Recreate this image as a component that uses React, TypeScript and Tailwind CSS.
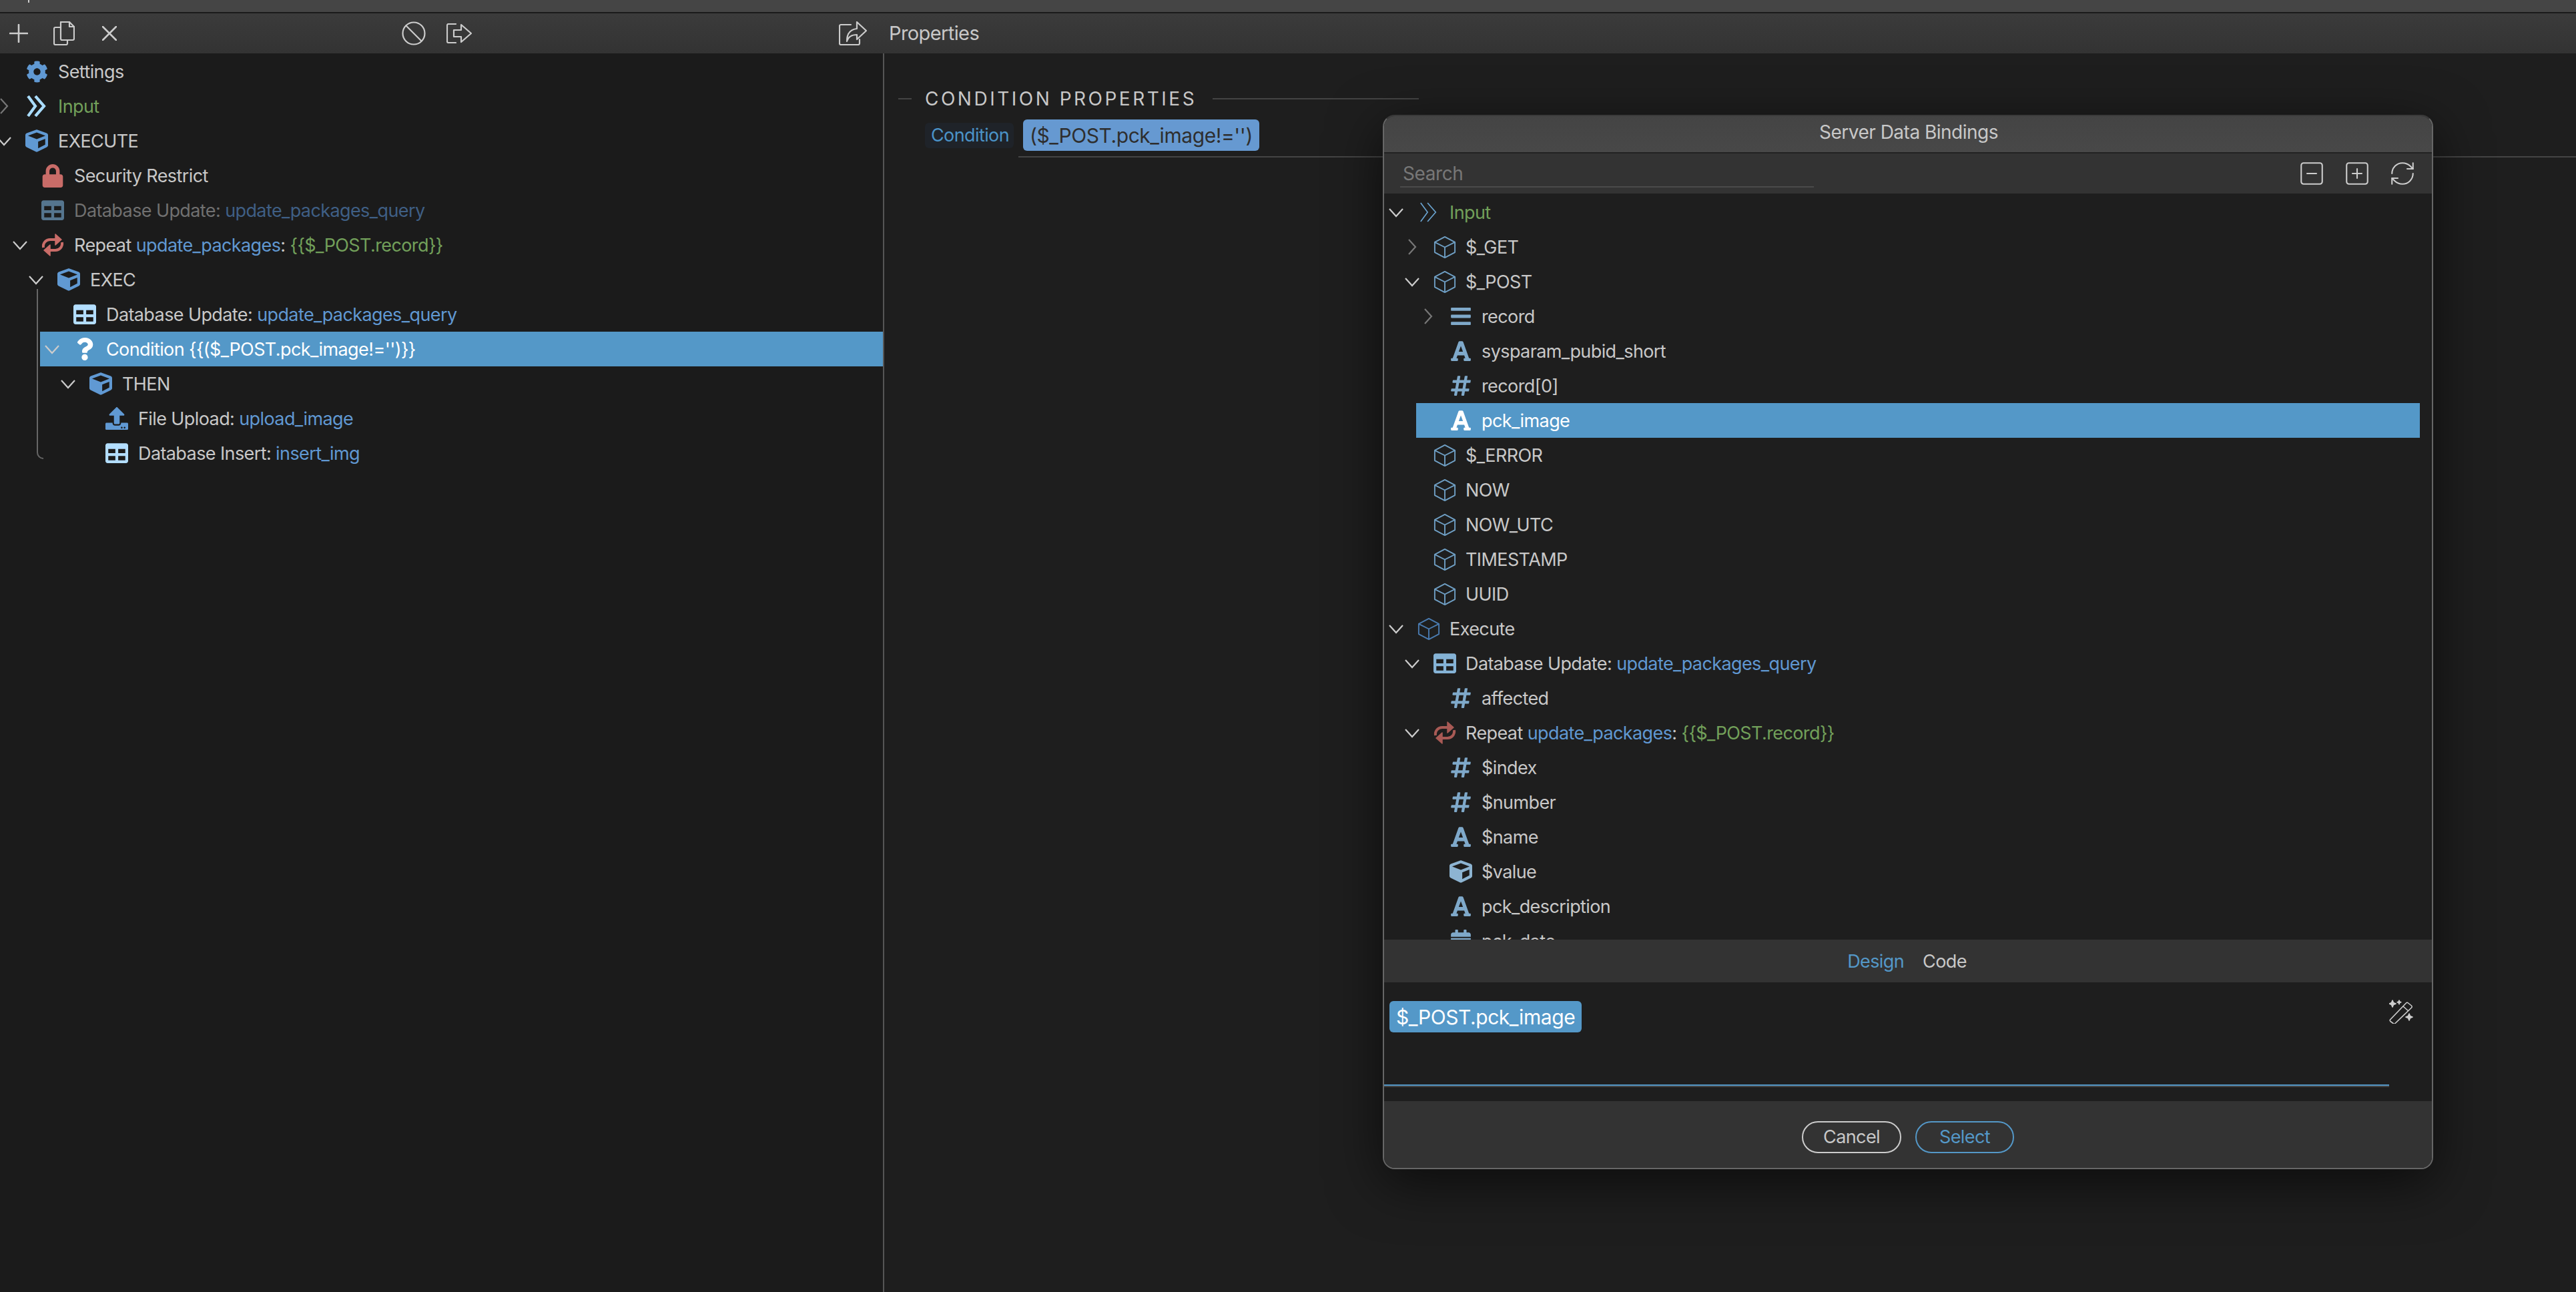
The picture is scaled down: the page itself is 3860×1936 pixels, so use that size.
import React from "react";
import { FaCog, FaCube, FaLock, FaTable, FaQuestion, FaUpload, FaFont, FaHashtag, FaBars, FaCalendarAlt } from "react-icons/fa";
import { SquareMinus, SquarePlus, RefreshCw } from "lucide-react";

const Chev = ({ open, dim }: { open?: boolean; dim?: boolean }) => (
  <svg viewBox="0 0 24 24" className="w-[24px] h-[24px]" fill="none" stroke={dim ? "#777" : "#ccc"} strokeWidth="2.2">
    {open ? <path d="M2 7l10 11L22 7" /> : <path d="M7 1l10 11L7 23" />}
  </svg>
);

const Outline = ({ c = "#6f9fc4" }: { c?: string }) => (
  <svg viewBox="0 0 36 36" className="w-[35px] h-[35px]" fill="none" stroke={c} strokeWidth="2" strokeLinejoin="round">
    <path d="M18 1.5l16 8.5v16l-16 8.5L2 26V10z" />
    <path d="M2 10l16 8 16-8M18 18v16.5" />
  </svg>
);

const Doubles = ({ thin }: { thin?: boolean }) => (
  <svg viewBox="0 0 32 32" className={thin ? "w-[30px] h-[32px]" : "w-[32px] h-[32px]"} fill="none" stroke={thin ? "#6aa3cf" : "#a9dcff"} strokeWidth={thin ? 1.8 : 4.2}>
    <path d="M3 1l11 15L3 31" />
    <path d="M14 1l13 15-13 15" />
  </svg>
);

const Loop = ({ c }: { c: string }) => (
  <svg viewBox="0 0 34 34" className="w-[34px] h-[34px]" fill="none" stroke={c} strokeWidth="4" strokeLinejoin="round">
    <path d="M3 21c-1-7 4-12 10-12h12" />
    <path d="M31 13c1 7-4 12-10 12H9" />
    <path d="M21 1l9 8-9 8z" fill={c} strokeWidth="1.5" />
    <path d="M13 17l-9 8 9 8z" fill={c} strokeWidth="1.5" />
  </svg>
);

const S = ({ c }: { c: React.ReactNode }) => <span className="text-[#6098d2]">{c}</span>;
const G = ({ c }: { c: React.ReactNode }) => <span className="text-[#72a05a]">{c}</span>;

const lvlLeft = ["-ml-[6px]", "pl-[18px]", "pl-[42px]", "pl-[66px]", "pl-[90px]", "pl-[114px]"];
const lvlModal = ["pl-[6px]", "pl-[30px]", "pl-[54px]"];

type R = { pad: string; chev?: "open" | "closed"; icon: React.ReactNode; text: React.ReactNode; sel?: boolean; cls?: string };

const Row = ({ pad, chev, icon, text, sel, cls, after }: R & { after: string }) => (
  <div className={`flex items-center h-[52px] whitespace-nowrap ${pad} ${sel ? "bg-[#5498c8] text-white" : ""} ${cls || ""}`}>
    <div className="w-[24px] h-[24px] shrink-0">{chev && <Chev open={chev === "open"} dim={chev === "closed"} />}</div>
    <div className="ml-[20px] w-[34px] flex justify-center items-center shrink-0">{icon}</div>
    <div className={`pt-[2px] ${after}`}>{text}</div>
  </div>
);

const blue = "#6099d3";
const pale = "#b3deff";
const slate = "#7fa9ca";

const left: R[] = [
  { pad: lvlLeft[0], icon: <FaCog size={33} color={blue} />, text: "Settings" },
  { pad: lvlLeft[0], chev: "closed", icon: <Doubles />, text: <G c="Input" /> },
  { pad: lvlLeft[0], chev: "open", icon: <FaCube size={34} color={blue} />, text: "EXECUTE" },
  { pad: lvlLeft[1], icon: <FaLock size={35} color="#c96c68" />, text: "Security Restrict" },
  { pad: lvlLeft[1], icon: <FaTable size={34} color="#55758e" />, text: <span className="text-[#707070]">Database Update: <span className="text-[#3f5f85]">update_packages_query</span></span> },
  { pad: lvlLeft[1], chev: "open", icon: <Loop c="#c96c68" />, text: <>Repeat <S c="update_packages" />: <G c="{{$_POST.record}}" /></> },
  { pad: lvlLeft[2], chev: "open", icon: <FaCube size={34} color={blue} />, text: "EXEC" },
  { pad: lvlLeft[3], icon: <FaTable size={34} color={pale} />, text: <>Database Update: <S c="update_packages_query" /></> },
  { pad: "ml-[60px] pl-[6px]", chev: "open", icon: <FaQuestion size={34} color="#fff" />, text: "Condition {{($_POST.pck_image!='')}}", sel: true },
  { pad: lvlLeft[4], chev: "open", icon: <FaCube size={34} color={blue} />, text: "THEN" },
  { pad: lvlLeft[5], icon: <FaUpload size={34} color={blue} />, text: <>File Upload: <S c="upload_image" /></> },
  { pad: lvlLeft[5], icon: <FaTable size={34} color={pale} />, text: <>Database Insert: <S c="insert_img" /></> },
];

const Hash = () => <FaHashtag size={34} color={slate} />;
const Aa = ({ c = slate }: { c?: string }) => <FaFont size={34} color={c} />;

const modal: R[] = [
  { pad: lvlModal[0], chev: "open", icon: <Doubles thin />, text: <G c="Input" /> },
  { pad: lvlModal[1], chev: "closed", icon: <Outline />, text: "$_GET" },
  { pad: lvlModal[1], chev: "open", icon: <Outline />, text: "$_POST" },
  { pad: lvlModal[2], chev: "closed", icon: <FaBars size={34} color={slate} />, text: "record" },
  { pad: lvlModal[2], icon: <Aa />, text: "sysparam_pubid_short" },
  { pad: lvlModal[2], icon: <Hash />, text: "record[0]" },
  { pad: "ml-[48px] mr-[18px] pl-[6px]", icon: <Aa c="#fff" />, text: "pck_image", sel: true },
  { pad: lvlModal[1], icon: <Outline />, text: "$_ERROR" },
  { pad: lvlModal[1], icon: <Outline />, text: "NOW" },
  { pad: lvlModal[1], icon: <Outline />, text: "NOW_UTC" },
  { pad: lvlModal[1], icon: <Outline />, text: "TIMESTAMP" },
  { pad: lvlModal[1], icon: <Outline />, text: "UUID" },
  { pad: lvlModal[0], chev: "open", icon: <Outline c="#4a7bb0" />, text: "Execute" },
  { pad: lvlModal[1], chev: "open", icon: <FaTable size={34} color="#85b3d6" />, text: <>Database Update: <S c="update_packages_query" /></> },
  { pad: lvlModal[2], icon: <Hash />, text: "affected" },
  { pad: lvlModal[1], chev: "open", icon: <Loop c="#a85a55" />, text: <>Repeat <S c="update_packages" />: <G c="{{$_POST.record}}" /></> },
  { pad: lvlModal[2], icon: <Hash />, text: "$index" },
  { pad: lvlModal[2], icon: <Hash />, text: "$number" },
  { pad: lvlModal[2], icon: <Aa />, text: "$name" },
  { pad: lvlModal[2], icon: <FaCube size={34} color="#8db4d2" />, text: "$value" },
  { pad: lvlModal[2], icon: <Aa />, text: "pck_description" },
  { pad: lvlModal[2], icon: <FaCalendarAlt size={34} color={slate} />, text: "pck_date" },
];

const tool = { fill: "none", stroke: "#ccc", strokeWidth: 2.2, strokeLinejoin: "round" as const, strokeLinecap: "round" as const };

export default function App() {
  return (
    <div className="relative w-[3860px] h-[1936px] overflow-hidden bg-[#1e1e1e] text-[#c8c8c8] text-[27px] tracking-[-0.6px] leading-[32px] font-['Inter',sans-serif]">
      <div className="h-[18px] bg-[#454545] pl-[42px]">
        <div className="w-[2px] h-[4px] bg-[#ccc]" />
      </div>
      <div className="h-[2px] bg-[#1a1a1a]" />
      <div className="h-[60px] flex items-center bg-gradient-to-b from-[#3b3b3b] to-[#333]">
        <div className="w-[1324px] h-full flex items-center pl-[14px] shrink-0">
          <svg viewBox="0 0 28 28" className="w-[28px] h-[28px]" {...tool} strokeWidth={2.6}><path d="M14 1v26M1 14h26" /></svg>
          <svg viewBox="0 0 32 36" className="ml-[38px] w-[32px] h-[36px]" {...tool}>
            <path d="M11 1h13l7 7v18a2 2 0 0 1-2 2H13a2 2 0 0 1-2-2z" />
            <path d="M11 9H3a2 2 0 0 0-2 2v22a2 2 0 0 0 2 2h16a2 2 0 0 0 2-2v-5" />
            <path d="M24 1v7h7" />
          </svg>
          <svg viewBox="0 0 22 22" className="ml-[41px] w-[22px] h-[22px]" {...tool} strokeWidth={2.6}><path d="M1 1l20 20M21 1L1 21" /></svg>
          <svg viewBox="0 0 36 36" className="ml-[427px] w-[36px] h-[36px]" {...tool}>
            <circle cx="18" cy="18" r="16.5" /><path d="M6.5 6.5l23 23" />
          </svg>
          <svg viewBox="0 0 38 30" className="ml-[31px] w-[38px] h-[30px]" {...tool}>
            <path d="M14 1H3a2 2 0 0 0-2 2v24a2 2 0 0 0 2 2h11" />
            <path d="M11 10h11V2l15 13-15 13v-8H11z" />
          </svg>
        </div>
        <svg viewBox="0 0 42 36" className="-ml-[67px] w-[42px] h-[36px] shrink-0" {...tool}>
          <path d="M18 5H3a2 2 0 0 0-2 2v26a2 2 0 0 0 2 2h26a2 2 0 0 0 2-2v-6" />
          <path d="M27 1l14 13-14 13v-7c-8 0-13 3-15 10 0-11 5-18 15-19z" />
        </svg>
        <div className="ml-[33px] text-[29px] tracking-[-0.6px]">Properties</div>
      </div>
      <div className="flex h-[1856px]">
        <div className="relative w-[1325px] shrink-0 bg-[#1b1b1b] border-r-2 border-[#555] pt-[1px] overflow-hidden">
          {left.map((r, i) => (
            <Row key={i} {...r} after="ml-[15px]" />
          ))}
          <div className="absolute left-[55px] top-[353px] w-[10px] h-[255px] border-l-2 border-b-2 border-[#666] rounded-bl-[10px]" />
        </div>
        <div className="flex-1 pl-[21px]">
          <div className="flex items-center mt-[56px] h-[24px] w-[780px]">
            <div className="w-[20px] h-[2px] bg-[#444]" />
            <div className="ml-[20px] text-[28px] tracking-[3.5px] text-[#c8c8c8] whitespace-nowrap">CONDITION PROPERTIES</div>
            <div className="ml-[24px] flex-1 h-[2px] bg-[#444]" />
          </div>
          <div className="flex items-center ml-[40px] mt-[19px]">
            <div className="h-[38px] w-[133px] pl-[2px] flex items-center justify-center rounded-[6px] bg-[#1f2329] text-[#4b93c8]">Condition</div>
            <div className="ml-[14px] h-[47px] w-[354px] flex items-center pl-[10px] rounded-[6px] bg-[#6699d1] text-[#2e2e2e] text-[30px] tracking-[-0.44px]">{"($_POST.pck_image!='')"}</div>
          </div>
          <div className="ml-[180px] mt-[8px] h-[2px] bg-[#444]" />
        </div>
      </div>

      <div className="absolute left-[2072px] top-[172px] w-[1574px] h-[1580px] flex flex-col overflow-hidden rounded-[18px] border-2 border-[#666] border-t-[#3a3a3a] bg-[#1e1e1e] shadow-[0_20px_80px_rgba(0,0,0,0.6)]">
        <div className="h-[54px] shrink-0 flex items-center justify-center pb-[6px] pl-[2px] text-[28px] tracking-[-0.5px] bg-gradient-to-b from-[#444] to-[#484848]">Server Data Bindings</div>
        <div className="h-[2px] shrink-0 bg-[#222]" />
        <div className="h-[60px] shrink-0 flex items-center bg-[#333]">
          <div className="ml-[24px] w-[620px] h-[38px] mt-[4px] pl-[4px] border-b-2 border-[#4a4a4a] text-[#777] text-[28px] tracking-[-0.4px] leading-[34px]">Search</div>
          <div className="ml-auto mr-[23px] flex items-center gap-[26px] text-[#ccc]">
            <SquareMinus size={42} strokeWidth={1.2} />
            <SquarePlus size={42} strokeWidth={1.2} />
            <RefreshCw size={42} strokeWidth={1.2} />
          </div>
        </div>
        <div className="h-[1118px] shrink-0 overflow-hidden pt-[2px] bg-[#1e1e1e]">
          {modal.map((r, i) => (
            <Row key={i} {...r} after="ml-[14px]" />
          ))}
        </div>
        <div className="h-[64px] shrink-0 flex items-center justify-center gap-[28px] pt-[2px] pr-[3px] bg-[#333]">
          <span className="text-[#5498c8]">Design</span>
          <span>Code</span>
        </div>
        <div className="h-[178px] shrink-0 relative bg-[#1e1e1e]">
          <div className="flex justify-between items-start pl-[8px] pt-[26px] w-[1542px]">
            <div className="h-[47px] mt-[2px] w-[288px] flex items-center pl-[10px] rounded-[6px] bg-[#5498c8] text-white text-[30px] tracking-[-0.44px]">$_POST.pck_image</div>
            <svg viewBox="0 0 36 36" className="w-[36px] h-[36px]" fill="none" stroke="#ccc" strokeWidth="1.6" strokeLinejoin="round">
              <path d="M1.500 30l24-25a2 2 0 0 1 3 0l5 4a2 2 0 0 1 0 3L9 35.500a2 2 0 0 1-3 0l-4-3a2 2 0 0 1-.5-2.500z" />
              <path d="M21 10l8 7" />
              <path d="M5 1l1.500 3.500L10 6l-3.500 1.500L5 11 3.500 7.500 0 6l3.500-1.500zM15 1l.8 2 2 .8-2 .8-.8 2-.8-2-2-.8 2-.8zM30 21l1.500 3.500L35 26l-3.500 1.500L30 31l-1.500-3.500L25 26l3.500-1.500z" fill="#ccc" />
            </svg>
          </div>
          <div className="mt-[78px] w-[1506px] border-t-2 border-[#5498c8]">
            <div className="h-[2px] bg-[#444]" />
          </div>
        </div>
        <div className="flex-1 flex items-start justify-center gap-[21px] bg-[#333] pt-[30px]">
          <div className="h-[48px] w-[149px] flex items-center justify-center rounded-full border-2 border-[#ccc]">Cancel</div>
          <div className="h-[48px] w-[148px] flex items-center justify-center rounded-full border-2 border-[#5498c8] text-[#5498c8]">Select</div>
        </div>
      </div>
    </div>
  );
}
